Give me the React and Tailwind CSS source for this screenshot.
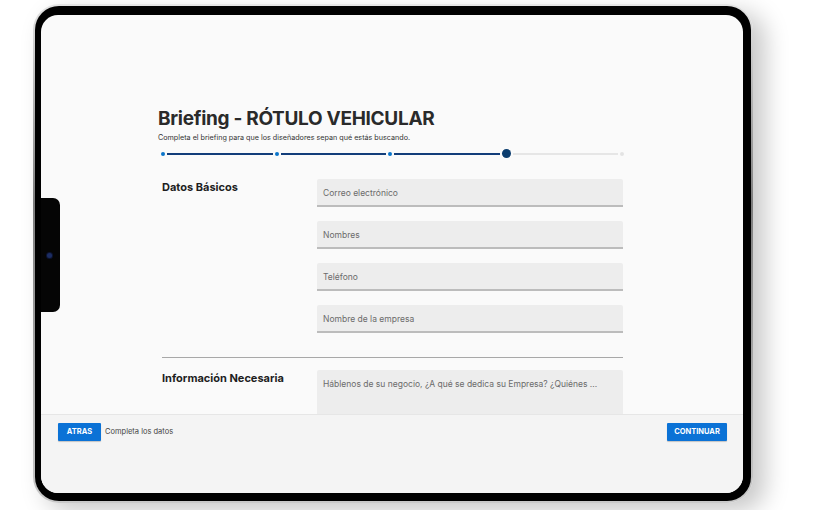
const font = { fontFamily: 'Inter, "Open Sans", sans-serif' };

function Field({ placeholder }) {
  return (
    <div className="h-[28px] rounded-t-[2px] bg-[#ededed] border-b-2 border-[#bcbcbc] flex items-center px-[6px] pt-[2px] text-[8.5px] text-[#6b6b6b]">
      {placeholder}
    </div>
  );
}

function Progress() {
  return (
    <div className="flex items-center h-[9px] ml-[3px] w-[463px]">
      <span className="w-[4px] h-[4px] rounded-full bg-[#0a74c9]" />
      <span className="flex-1 h-[2px] mx-[2px] bg-[#123d7a]" />
      <span className="w-[4px] h-[4px] rounded-full bg-[#0a74c9]" />
      <span className="flex-1 h-[2px] mx-[2px] bg-[#123d7a]" />
      <span className="w-[4px] h-[4px] rounded-full bg-[#0a74c9]" />
      <span className="flex-1 h-[2px] mx-[2px] bg-[#123d7a]" />
      <span className="w-[9px] h-[9px] rounded-full bg-[#0b3d6e]" />
      <span className="flex-1 h-[2px] mx-[2px] bg-[#e6e6e6]" />
      <span className="w-[4px] h-[4px] rounded-full bg-[#e3e3e3]" />
    </div>
  );
}

export default function App() {
  return (
    <div className="w-[822px] h-[510px] bg-white overflow-hidden pt-[4px] pl-[33px]" style={font}>
      {/* tablet frame */}
      <div className="w-[720px] h-[499px] rounded-[26px] p-[2px] bg-[linear-gradient(180deg,#e4e4e4,#7d7d7d_40%,#c9c9c9)] shadow-[12px_8px_24px_rgba(0,0,0,0.22)]">
        <div className="w-full h-full rounded-[24px] bg-black pt-[9px] pl-[6px] pr-[8px] pb-[8px]">
          <div className="relative w-full h-full rounded-[17px] overflow-hidden bg-[#fafafa] flex flex-col">
            {/* side notch with camera */}
            <div className="absolute left-0 top-[183px] w-[19px] h-[114px] bg-[#050505] rounded-r-[7px] flex items-center pl-[6px]">
              <span className="w-[5px] h-[5px] rounded-full bg-[#1c2d63] ring-1 ring-[#0d1430]" />
            </div>

            <div className="flex-1 overflow-hidden pl-[117px] pt-[92px]">
              <div className="w-[465px]">
                <h1 className="text-[19px] leading-[24px] font-bold text-[#2a2a2a] tracking-[-0.3px]">
                  Briefing - RÓTULO VEHICULAR
                </h1>
                <p className="text-[7.2px] leading-[10px] text-[#333] mt-[2px]">
                  Completa el briefing para que los diseñadores sepan qué estás buscando.
                </p>
                <div className="mt-[6px]">
                  <Progress />
                </div>

                <div className="grid grid-cols-[159px_306px] mt-[21px]">
                  <div className="pl-[4px] pt-[1px] text-[11px] leading-[14px] font-bold text-[#1e1e1e]">
                    Datos Básicos
                  </div>
                  <div className="flex flex-col gap-[14px]">
                    <Field placeholder="Correo electrónico" />
                    <Field placeholder="Nombres" />
                    <Field placeholder="Teléfono" />
                    <Field placeholder="Nombre de la empresa" />
                  </div>
                </div>

                <div className="ml-[4px] mt-[24px] h-px bg-[#a8a8a8]" />

                <div className="grid grid-cols-[159px_306px] mt-[12px]">
                  <div className="pl-[4px] pt-[1px] text-[11px] leading-[14px] font-bold text-[#1e1e1e]">
                    Información Necesaria
                  </div>
                  <div className="h-[90px] rounded-t-[2px] bg-[#ededed] px-[6px] pt-[8px] text-[8.5px] leading-[12px] text-[#6b6b6b]">
                    Háblenos de su negocio, ¿A qué se dedica su Empresa? ¿Quiénes ...
                  </div>
                </div>
              </div>
            </div>

            <div className="h-[79px] shrink-0 bg-[#f4f4f4] border-t border-[#e6e6e6] flex items-start justify-between pl-[17px] pr-[16px] pt-[8px]">
              <div className="flex items-center gap-[4px]">
                <button className="h-[18px] w-[43px] bg-[#0b72d6] text-white text-[7.5px] font-bold rounded-[1px] shadow-[0_1px_1px_rgba(0,0,0,0.2)]">
                  ATRAS
                </button>
                <span className="text-[7.5px] text-[#444]">Completa los datos</span>
              </div>
              <button className="h-[18px] w-[60px] bg-[#0b72d6] text-white text-[7.5px] font-bold rounded-[1px] shadow-[0_1px_1px_rgba(0,0,0,0.2)]">
                CONTINUAR
              </button>
            </div>
          </div>
        </div>
      </div>
    </div>
  );
}
